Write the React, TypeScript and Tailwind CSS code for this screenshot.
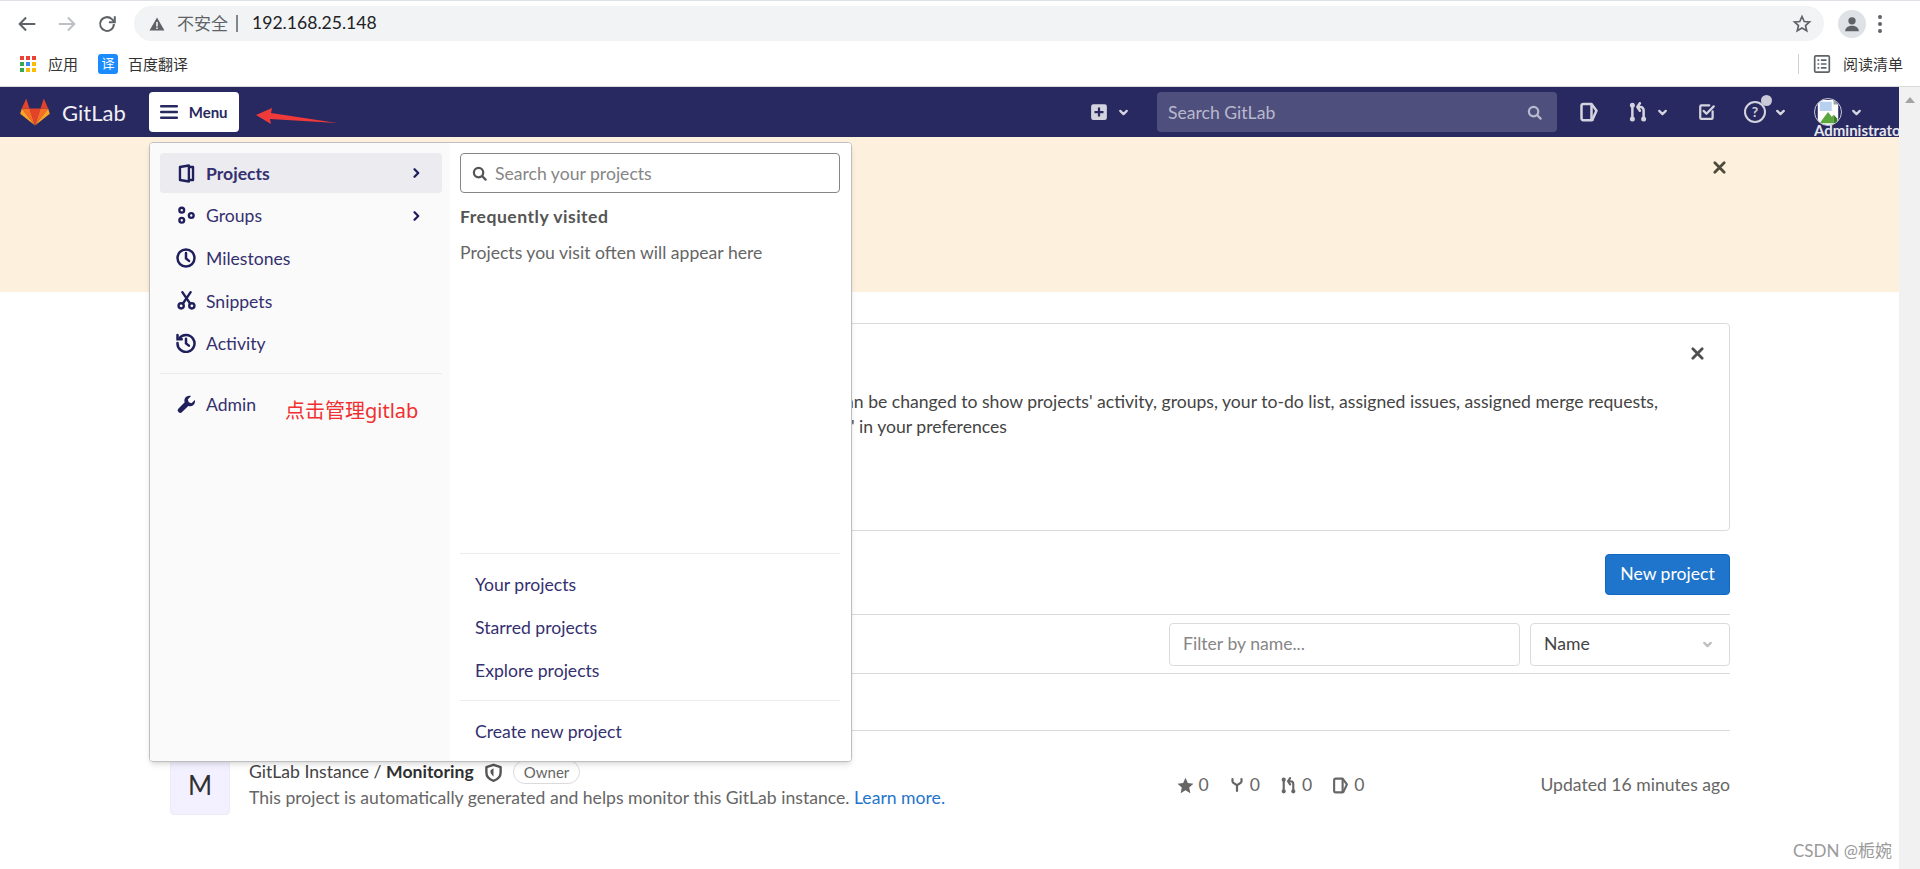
const sans = "font-['Lato','Noto_Sans_CJK_SC',sans-serif]";

function Arrow({ className, back }: { className: string; back?: boolean }) {
  return (
    <svg viewBox="0 0 24 24" className={className} fill="none" stroke="currentColor" strokeWidth="2.2">
      {back ? <path d="M21 12H4M11 5l-7 7 7 7" /> : <path d="M3 12h17M13 5l7 7-7 7" />}
    </svg>
  );
}

function Chevron({ className }: { className: string }) {
  return (
    <svg viewBox="0 0 16 16" className={className} fill="none" stroke="currentColor" strokeWidth="2.8" strokeLinecap="round" strokeLinejoin="round">
      <path d="M4 6l4 4 4-4" />
    </svg>
  );
}

function ChevronRight() {
  return (
    <svg viewBox="0 0 16 16" className="w-3 h-3 text-[#1f1f5c]" fill="none" stroke="currentColor" strokeWidth="3" strokeLinecap="round" strokeLinejoin="round">
      <path d="M6 3l5 5-5 5" />
    </svg>
  );
}

function SearchIcon({ className }: { className: string }) {
  return (
    <svg viewBox="0 0 16 16" className={className} fill="none" stroke="currentColor" strokeWidth="2.4" strokeLinecap="round">
      <circle cx="7" cy="7" r="5" />
      <path d="M11 11l3.5 3.5" />
    </svg>
  );
}

function CloseIcon({ className }: { className: string }) {
  return (
    <svg viewBox="0 0 16 16" className={className} fill="none" stroke="currentColor" strokeWidth="3" strokeLinecap="round">
      <path d="M3 3l10 10M13 3L3 13" />
    </svg>
  );
}

function IssueIcon({ className }: { className: string }) {
  return (
    <svg viewBox="0 0 16 16" className={className} fill="none" stroke="currentColor" strokeWidth="2" strokeLinejoin="round">
      <path d="M2 3a1.500 1.500 0 0 1 1.500-1.500H10L14 7l-3 6.500a1 1 0 0 1-1 1H3.500A1.500 1.500 0 0 1 2 13z" />
      <path d="M10 1.500v13" />
    </svg>
  );
}

function MergeIcon({ className }: { className: string }) {
  return (
    <svg viewBox="0 0 16 16" className={className} fill="none" stroke="currentColor" strokeWidth="2" strokeLinecap="round" strokeLinejoin="round">
      <path d="M3.500 4v8M12.500 12V6.500a2.500 2.500 0 0 0-2.500-2.500H8M9.500 1L7.500 4l2 3" />
      <circle cx="3.500" cy="2.500" r="1" fill="currentColor" />
      <circle cx="3.500" cy="13.500" r="1" fill="currentColor" />
      <circle cx="12.500" cy="13.500" r="1" fill="currentColor" />
    </svg>
  );
}

function NavItem({ label, active, more, icon }: { label: string; active?: boolean; more?: boolean; icon: React.ReactNode }) {
  return (
    <div className={`h-[40px] mb-[2.6px] rounded-[4px] pl-[16px] pr-[20px] flex items-center text-[17.6px] text-[#35306f] ${active ? 'bg-[#ebebf0] font-bold' : ''}`}>
      <span className="w-[20px] mr-[10px] flex justify-center text-[#1f1f5c]">{icon}</span>
      <span className="flex-1 pt-[2px]">{label}</span>
      {more && <ChevronRight />}
    </div>
  );
}

const navIcon = 'w-[19px] h-[19px]';

function MenuDropdown() {
  return (
    <div className="absolute left-[149px] top-[142px] w-[703px] h-[620px] z-10 flex rounded-[4px] border border-[#bfbfbf] bg-white shadow-md overflow-hidden">
      <div className="w-[300px] bg-[#fafafa] pt-[10px] pl-[10px] pr-[8px]">
        <NavItem label="Projects" active more icon={
          <svg viewBox="0 0 16 16" className={navIcon} fill="none" stroke="currentColor" strokeWidth="2" strokeLinejoin="round">
            <path d="M2.500 2.500l7.500-1.200v13.400l-7.500-1.200zM10 2.500h3.500v11H10" />
          </svg>
        } />
        <NavItem label="Groups" more icon={
          <svg viewBox="0 0 16 16" className={navIcon} fill="none" stroke="currentColor" strokeWidth="2">
            <circle cx="4" cy="3.500" r="2" />
            <circle cx="4" cy="12" r="2" />
            <circle cx="12" cy="8" r="2" />
          </svg>
        } />
        <NavItem label="Milestones" icon={
          <svg viewBox="0 0 16 16" className="w-[20px] h-[20px]" fill="none" stroke="currentColor" strokeWidth="2" strokeLinecap="round">
            <circle cx="8" cy="8" r="6.800" />
            <path d="M8 4v4.300l2.400 2" />
          </svg>
        } />
        <NavItem label="Snippets" icon={
          <svg viewBox="0 0 16 16" className={navIcon} fill="none" stroke="currentColor" strokeWidth="2" strokeLinecap="round">
            <circle cx="3.500" cy="12.500" r="2.200" />
            <circle cx="12.500" cy="12.500" r="2.200" />
            <path d="M4.500 1l6.500 9.500M11.500 1L5 10.500" />
          </svg>
        } />
        <NavItem label="Activity" icon={
          <svg viewBox="0 0 16 16" className="w-[20px] h-[20px]" fill="none" stroke="currentColor" strokeWidth="2" strokeLinecap="round">
            <path d="M2.600 4.200A6.800 6.800 0 1 1 1.200 8" />
            <path d="M1.200 1.500v3.400h3.400" />
            <path d="M8 4.500v3.800l2.300 1.800" />
          </svg>
        } />
        <div className="border-t border-[#ececec] mt-[10px] mb-[10px]" />
        <NavItem label="Admin" icon={
          <svg viewBox="0 0 16 16" className={navIcon} fill="currentColor">
            <path d="M15 4.200l-2.800 2.700-2.300-.8-.8-2.300L11.800.9c-2.100-.6-4.500.3-5.300 2.300-.4 1-.4 2 0 3L1.300 11.400a2.100 2.100 0 0 0 3 3l5.200-5.200c2.600 1 5.500-.7 5.700-3.500 0-.5 0-1-.2-1.500z" />
          </svg>
        } />
      </div>
      <div className="flex-1 pl-[10px] pr-[11px] pt-[10px] flex flex-col bg-white">
        <div className="h-[40px] shrink-0 rounded-[4px] border border-[#868686] flex items-center pl-[11px] text-[17.6px] text-[#868686]">
          <SearchIcon className="w-[15px] h-[15px] text-[#555] mr-[8px]" />
          <span className="pt-[2px]">Search your projects</span>
        </div>
        <div className="mt-[13px] text-[17.6px] font-bold tracking-[0.5px] text-[#555] leading-[22px]">Frequently visited</div>
        <div className="mt-[14px] text-[17.6px] text-[#666] leading-[22px]">Projects you visit often will appear here</div>
        <div className="mt-[289px] border-t border-[#ececec] pt-[10px] pl-[15px] text-[17.6px] text-[#35306f]">
          <div className="h-[42.500px] flex items-center">Your projects</div>
          <div className="h-[42.500px] flex items-center">Starred projects</div>
          <div className="h-[42.500px] pt-[1px] flex items-center">Explore projects</div>
        </div>
        <div className="mt-[8px] border-t border-[#ececec] pt-[10px] pl-[15px] text-[17.6px] text-[#35306f]">
          <div className="h-[42.500px] flex items-center">Create new project</div>
        </div>
      </div>
    </div>
  );
}

function GitlabLogo() {
  return (
    <svg viewBox="0 0 30 28" className="w-[30px] h-[28px]">
      <polygon points="15,27.500 20.500,10.500 9.500,10.500" fill="#e24329" />
      <polygon points="15,27.500 9.500,10.500 1.800,10.500" fill="#fc6d26" />
      <polygon points="1.800,10.500 0.200,15.800 15,27.500" fill="#fca326" />
      <polygon points="1.800,10.500 9.500,10.500 6.200,0.500" fill="#e24329" />
      <polygon points="15,27.500 20.500,10.500 28.200,10.500" fill="#fc6d26" />
      <polygon points="28.200,10.500 29.800,15.800 15,27.500" fill="#fca326" />
      <polygon points="28.200,10.500 20.500,10.500 23.800,0.500" fill="#e24329" />
    </svg>
  );
}

function BrowserBar() {
  return (
    <div className="bg-white h-[87px] shrink-0 border-t border-[#dee1e6] border-b-[#d9d9d9] border-b relative">
      <div className="h-[42px] flex items-center pt-[3px]">
        <Arrow back className="w-[22px] h-[22px] ml-[16px] text-[#5f6368]" />
        <Arrow className="w-[22px] h-[22px] ml-[18px] text-[#bdc1c6]" />
        <svg viewBox="0 0 24 24" className="w-[22px] h-[22px] ml-[18px] text-[#5f6368]" fill="none" stroke="currentColor" strokeWidth="2.200">
          <path d="M19.500 12a7.500 7.500 0 1 1-2.200-5.300L20 9.500" />
          <path d="M20.500 3.500v6.500H14" />
        </svg>
        <div className="ml-[16px] w-[1690px] h-[35px] rounded-full bg-[#f1f3f4] flex items-center">
          <svg viewBox="0 0 16 16" className="w-[16px] h-[16px] ml-[15px] text-[#5f6368]" fill="currentColor">
            <path d="M8 1.500L15.500 14.500H.500zM7.200 6v4.500h1.600V6zM7.200 11.500V13h1.600v-1.500z" fillRule="evenodd" />
          </svg>
          <span className="ml-[12px] text-[17px] text-[#5f6368]">不安全</span>
          <span className="ml-[8px] w-[2px] h-[17px] bg-[#80868b]" />
          <span className="ml-[14px] text-[17.6px] text-[#202124]">192.168.25.148</span>
          <svg viewBox="0 0 24 24" className="w-[20px] h-[20px] ml-auto mr-[12px] text-[#5f6368]" fill="none" stroke="currentColor" strokeWidth="2">
            <path d="M12 3l2.700 6 6.300.6-4.800 4.200 1.500 6.400L12 16.900l-5.700 3.300 1.500-6.400L3 9.600 9.300 9z" />
          </svg>
        </div>
        <div className="ml-[14px] w-[28px] h-[28px] rounded-full bg-[#dee1e6] flex items-center justify-center overflow-hidden">
          <svg viewBox="0 0 24 24" className="w-[22px] h-[22px] text-[#5f6368]" fill="currentColor">
            <circle cx="12" cy="8.500" r="4" />
            <path d="M4.500 20c0-4 4-6 7.500-6s7.500 2 7.500 6z" />
          </svg>
        </div>
        <div className="ml-[12px] flex flex-col gap-[3px]">
          <span className="w-[4px] h-[4px] rounded-full bg-[#5f6368]" />
          <span className="w-[4px] h-[4px] rounded-full bg-[#5f6368]" />
          <span className="w-[4px] h-[4px] rounded-full bg-[#5f6368]" />
        </div>
      </div>
      <div className="h-[42px] flex items-center text-[15px] text-[#333]">
        <div className="ml-[20px] grid grid-cols-3 gap-[2.500px] w-[16px]">
          {['#ea4335', '#ea4335', '#ea4335', '#34a853', '#4285f4', '#fbbc04', '#34a853', '#fbbc04', '#fbbc04'].map((c, i) => (
            <span key={i} className="w-[3.800px] h-[3.800px]" style={{ backgroundColor: c }} />
          ))}
        </div>
        <span className="ml-[12px]">应用</span>
        <span className="ml-[20px] w-[20px] h-[20px] rounded-[3px] bg-[#1a8cff] text-white text-[13px] flex items-center justify-center">译</span>
        <span className="ml-[10px]">百度翻译</span>
        <span className="ml-auto w-px h-[20px] bg-[#d0d0d0]" />
        <svg viewBox="0 0 16 16" className="ml-[14px] w-[18px] h-[18px] text-[#5f6368]" fill="none" stroke="currentColor" strokeWidth="1.500">
          <rect x="1.500" y="0.800" width="13" height="14.400" rx="1" />
          <path d="M4 4.500h1.500M7 4.500h5M4 8h1.500M7 8h5M4 11.500h1.500M7 11.500h5" />
        </svg>
        <span className="ml-[12px] mr-[17px]">阅读清单</span>
      </div>
    </div>
  );
}

function TopNav() {
  return (
    <div className="relative h-[50px] shrink-0 bg-[#292961] flex items-center text-[#d4d4df]">
      <div className="ml-[20px]"><GitlabLogo /></div>
      <span className="ml-[12px] text-[22px] text-[#f0f0f5]">GitLab</span>
      <div className="ml-[23px] w-[90px] h-[40px] rounded-[4px] bg-white flex items-center pl-[11px] text-[#292961]">
        <svg viewBox="0 0 18 14" className="w-[18px] h-[14px]" fill="currentColor">
          <rect y="0" width="18" height="2.400" rx="1" />
          <rect y="5.800" width="18" height="2.400" rx="1" />
          <rect y="11.600" width="18" height="2.400" rx="1" />
        </svg>
        <span className="ml-[11px] text-[15px] font-bold">Menu</span>
      </div>
      <div className="ml-auto flex items-center">
        <svg viewBox="0 0 16 16" className="w-[18px] h-[18px]" fill="currentColor">
          <path fillRule="evenodd" d="M3 1h10a2 2 0 0 1 2 2v10a2 2 0 0 1-2 2H3a2 2 0 0 1-2-2V3a2 2 0 0 1 2-2zM7 4v3H4v2h3v3h2V9h3V7H9V4z" />
        </svg>
        <Chevron className="ml-[9px] w-[13px] h-[13px]" />
        <div className="ml-[27px] w-[400px] h-[40px] rounded-[4px] bg-[#4f4f7e] flex items-center pl-[11px] pr-[15px] text-[17.6px] text-[#b9b9cc]">
          <span className="flex-1 pt-[3px]">Search GitLab</span>
          <SearchIcon className="w-[15px] h-[15px]" />
        </div>
        <IssueIcon className="ml-[22px] w-[20px] h-[20px]" />
        <MergeIcon className="ml-[29px] w-[20px] h-[20px]" />
        <Chevron className="ml-[8px] w-[13px] h-[13px]" />
        <svg viewBox="0 0 16 16" className="ml-[29px] w-[18px] h-[18px]" fill="none" stroke="currentColor" strokeWidth="2" strokeLinecap="round" strokeLinejoin="round">
          <path d="M13 7.500V13a1 1 0 0 1-1 1H3a1 1 0 0 1-1-1V3a1 1 0 0 1 1-1h7" />
          <path d="M5 7l2.500 2.500L14 3" />
        </svg>
        <div className="relative ml-[28px] w-[22px] h-[22px] rounded-full border-2 border-current flex items-center justify-center text-[14px] font-bold leading-none">
          ?
          <span className="absolute -top-[8px] -right-[8px] w-[11px] h-[11px] rounded-full bg-[#c9c9d8]" />
        </div>
        <Chevron className="ml-[8px] w-[13px] h-[13px]" />
        {/* broken avatar image placeholder */}
        <div className="relative ml-[27px] w-[28px] h-[28px] rounded-full border border-[#c9c9d8] overflow-hidden">
          <svg viewBox="0 0 28 28" className="w-full h-full">
            <path d="M3 1h17l5 5v22H3z" fill="#fff" />
            <path d="M20 1v5h5z" fill="#9aa0a6" />
            <path d="M5 3h13v10H5z" fill="#b8d0f0" />
            <path d="M5 26l9-12 4 5 2-2v9z" fill="#5aa83c" />
            <path d="M20 17l4 4v5h-4z" fill="#3b7d27" />
          </svg>
        </div>
        <Chevron className="ml-[8px] mr-[36px] w-[13px] h-[13px]" />
      </div>
      {/* avatar alt text runs off the bar */}
      <div className="absolute right-0 top-[36px] w-[85px] h-[14px] overflow-hidden text-[15px] leading-[14px] font-bold whitespace-nowrap text-[#e6e6ee]">Administrator</div>
    </div>
  );
}

function Stat({ icon, n, gap }: { icon: React.ReactNode; n: string; gap: string }) {
  return (
    <span className={`flex items-center ${gap} text-[#666]`}>
      {icon}
      <span className="ml-[5px]">{n}</span>
    </span>
  );
}

function MainContent() {
  return (
    <div className="flex-1 bg-white text-[17.6px] text-[#303030]">
      <div className="h-[155px] bg-[#fdf0dc] relative">
        <CloseIcon className="absolute right-[172px] top-[23px] w-[15px] h-[15px] text-[#4f4a3c]" />
      </div>
      <div className="px-[169px]">
        <div className="relative mt-[31px] h-[208px] rounded-[4px] border border-[#dbdbdb] pt-[65px] leading-[25px] text-[#444]">
          <CloseIcon className="absolute right-[24px] top-[22px] w-[15px] h-[15px] text-[#4f4f4f]" />
          <div className="whitespace-nowrap text-right pr-[71px]">can be changed to show projects' activity, groups, your to-do list, assigned issues, assigned merge requests,</div>
          <div className="whitespace-nowrap pl-[681px]">' in your preferences</div>
        </div>
        <div className="mt-[23px] flex justify-end">
          <div className="w-[125px] h-[41px] rounded-[4px] bg-[#1f75cb] border border-[#1068bf] text-white flex items-center justify-center">New project</div>
        </div>
        <div className="mt-[19px] border-y border-[#dbdbdb] h-[60px] flex items-center justify-end gap-[10px]">
          <div className="w-[351px] h-[43px] rounded-[4px] border border-[#dbdbdb] flex items-center pl-[13px] text-[#868686]">Filter by name...</div>
          <div className="w-[200px] h-[43px] rounded-[4px] border border-[#dbdbdb] flex items-center pl-[13px] pr-[15px] text-[#444]">
            <span className="flex-1">Name</span>
            <Chevron className="w-[13px] h-[13px] text-[#bfbfbf]" />
          </div>
        </div>
        <div className="h-[57px] border-b border-[#dbdbdb]" />
        <div className="flex items-start">
          <div className="mt-[24px] ml-[1px] w-[60px] h-[60px] rounded-[4px] border border-[#ececf5] bg-[#f3f0ff] flex items-center justify-center text-[26px] text-[#303030]">M</div>
          <div className="ml-[19px] mt-[28px] flex-1">
            <div className="flex items-center h-[26px]">
              <span className="text-[#444]">GitLab Instance / <span className="font-bold text-[#303030]">Monitoring</span></span>
              <svg viewBox="0 0 16 16" className="ml-[10px] w-[19px] h-[19px] text-[#555]" fill="none" stroke="currentColor" strokeWidth="2" strokeLinejoin="round">
                <path d="M8 1.500l6 2v4.500c0 3.500-3 6-6 7-3-1-6-3.500-6-7V3.500z" />
                <path d="M8 4.500v7L5.500 8.500V6z" fill="currentColor" stroke="none" />
              </svg>
              <span className="ml-[10px] h-[24px] px-[10px] rounded-full border border-[#dbdbdb] text-[15px] text-[#666] flex items-center">Owner</span>
            </div>
            <div className="text-[#666] leading-[26px]">
              This project is automatically generated and helps monitor this GitLab instance. <span className="text-[#1f75cb]">Learn more.</span>
            </div>
          </div>
          <div className="mt-[41px] flex items-center">
            <Stat gap="mr-[20px]" n="0" icon={
              <svg viewBox="0 0 16 16" className="w-[17px] h-[17px]" fill="currentColor"><path d="M8 .800l2.200 4.900 5.300.6-4 3.600 1.100 5.300L8 12.500l-4.600 2.700 1.100-5.300-4-3.600 5.300-.6z" /></svg>
            } />
            <Stat gap="mr-[20px]" n="0" icon={
              <svg viewBox="0 0 16 16" className="w-[16px] h-[16px]" fill="none" stroke="currentColor" strokeWidth="2.200" strokeLinecap="round"><path d="M3.500 2v2.500c0 2 4.500 2.500 4.500 4.500v5M12.500 2v2.500c0 2-4.500 2.500-4.500 4.500" /></svg>
            } />
            <Stat gap="mr-[20px]" n="0" icon={<MergeIcon className="w-[17px] h-[17px]" />} />
            <Stat gap="mr-[176px]" n="0" icon={<IssueIcon className="w-[17px] h-[17px]" />} />
            <span className="text-[#666] whitespace-nowrap">Updated 16 minutes ago</span>
          </div>
        </div>
      </div>
    </div>
  );
}

export default function App() {
  return (
    <div className={`relative h-[869px] overflow-hidden flex flex-col bg-white ${sans}`}>
      <BrowserBar />
      <div className="flex flex-1 min-h-0">
        <div className="flex-1 flex flex-col min-w-0">
          <TopNav />
          <MainContent />
        </div>
        <div className="w-[21px] bg-[#f1f1f1] flex justify-center pt-[10px]">
          <span className="w-0 h-0 border-x-[5px] border-x-transparent border-b-[6px] border-b-[#a3a3a3]" />
        </div>
      </div>

      <MenuDropdown />

      {/* screenshot annotations */}
      <svg viewBox="0 0 82 16" className="absolute left-[256px] top-[108px] w-[82px] h-[16px] z-20">
        <polygon points="0,7 16,0 15,5 81,15 14,11 15,16" fill="#f03a3a" />
      </svg>
      <div className="absolute left-[285px] top-[398px] z-20 font-['Noto_Sans','Noto_Sans_CJK_SC',sans-serif] text-[20px] leading-[26px] text-[#f03030]">点击管理gitlab</div>
      <div className="absolute left-[1793px] top-[840px] z-20 text-[17px] leading-[22px] text-[#9a9a9a] whitespace-nowrap">CSDN @栀婉</div>
    </div>
  );
}
